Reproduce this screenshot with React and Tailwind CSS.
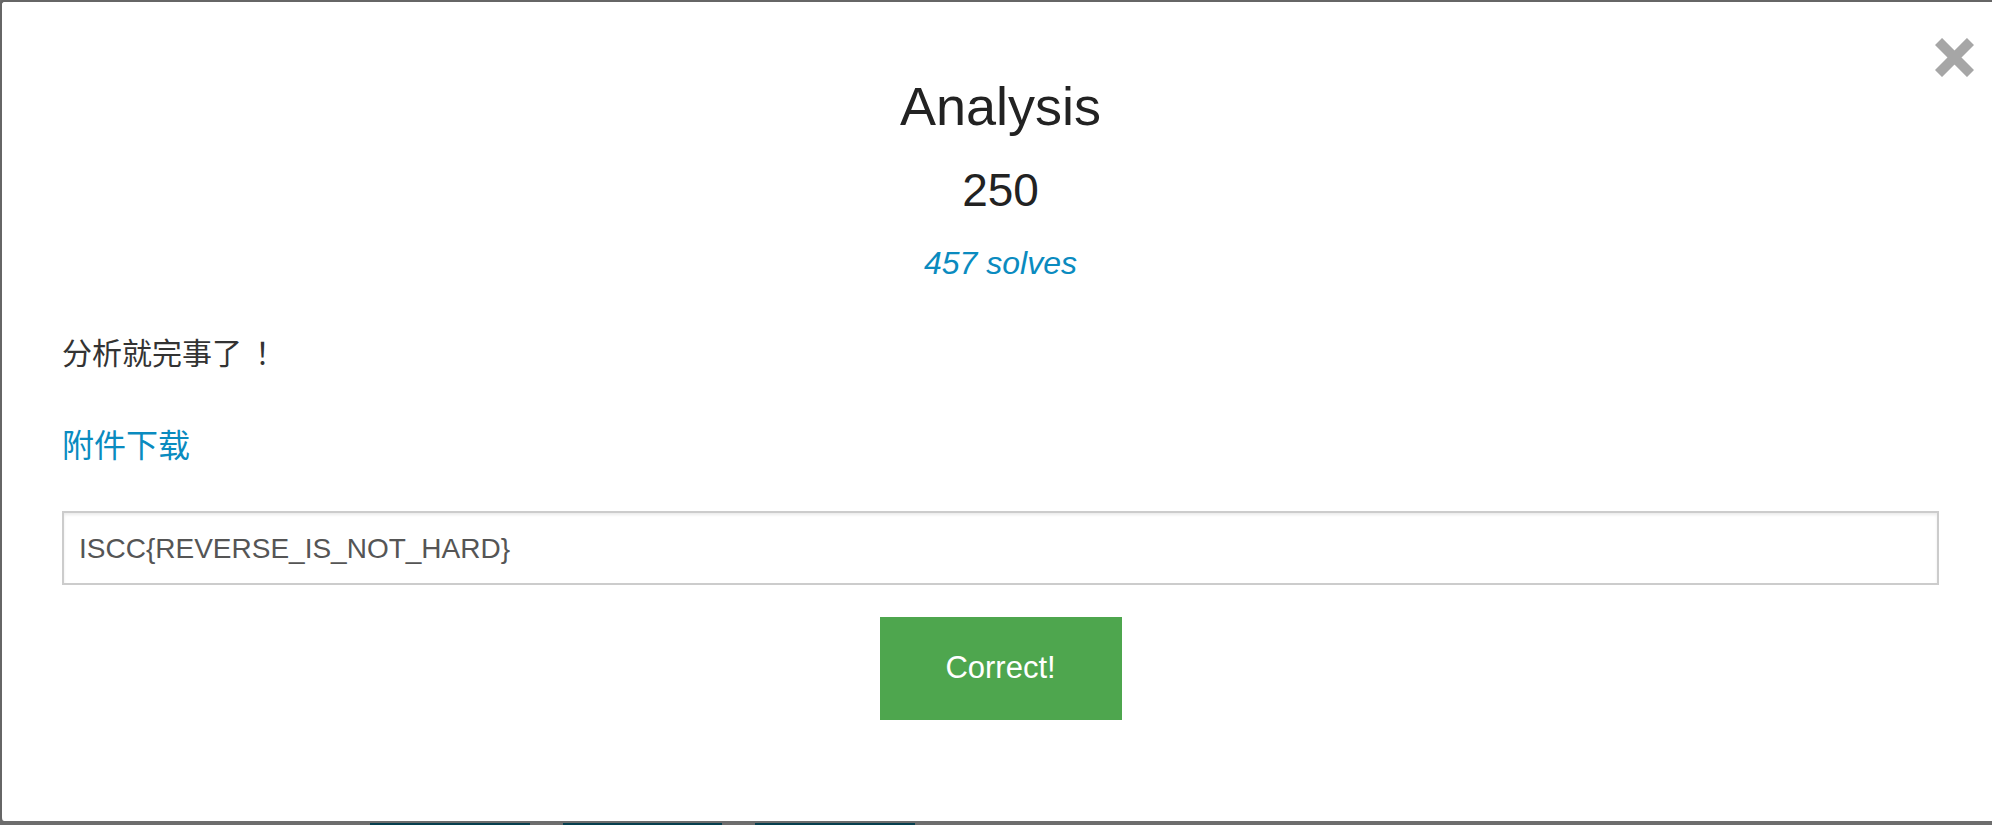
export default function App() {
  return (
    <div className="h-[825px] w-full overflow-hidden bg-[#6d6d6d] font-['Liberation_Sans','Noto_Sans_CJK_SC',sans-serif]">
      <div className="relative box-border h-[821px] w-[1999px] rounded-l-[4px] border-l-2 border-t-2 border-[#666] bg-white px-[60px] pt-[74px]">
        <button className="absolute left-[1933px] top-[36px] h-[39px] w-[39px] p-0" aria-label="Close">
          <svg width="39" height="39" viewBox="0 0 39 39">
            <path d="M3.5 3.5 L35.5 35.5 M35.5 3.5 L3.5 35.5" stroke="#a6a6a6" strokeWidth="10" strokeLinecap="butt" fill="none" />
          </svg>
        </button>
        <h1 className="text-center text-[54px] leading-[60px] text-[#222]">Analysis</h1>
        <div className="mt-[29px] text-center text-[46px] leading-[50px] text-[#222]">250</div>
        <div className="mt-[30px] text-center text-[32px] italic leading-[36px] text-[#0a8bbf]">457 solves</div>
        <p className="mt-[53px] text-[30px] leading-[40px] text-[#333]">
          分析就完事了<span className="ml-[13px]">！</span>
        </p>
        <div className="mt-[52px] text-[32px] leading-[40px]">
          <a className="text-[#0a8bbf]">附件下载</a>
        </div>
        <input
          readOnly
          value="ISCC{REVERSE_IS_NOT_HARD}"
          className="mt-[45px] box-border block h-[74px] w-full border-2 border-[#ccc] bg-white pb-[16px] pl-[15px] pt-[18px] text-[28px] leading-[36px] text-[#555] shadow-[inset_0_2px_3px_rgba(0,0,0,0.08)] outline-none"
        />
        <div className="mt-[32px] flex justify-center">
          <button className="flex h-[103px] w-[242px] items-center justify-center bg-[#4ea64e] text-[31px] text-white">
            Correct!
          </button>
        </div>
      </div>
      <div className="flex h-[4px] gap-[33px] pl-[370px] pt-[2px]">
        <div className="h-[2px] w-[160px] bg-[#063f4f]" />
        <div className="h-[2px] w-[159px] bg-[#063f4f]" />
        <div className="h-[2px] w-[160px] bg-[#063f4f]" />
      </div>
    </div>
  );
}
